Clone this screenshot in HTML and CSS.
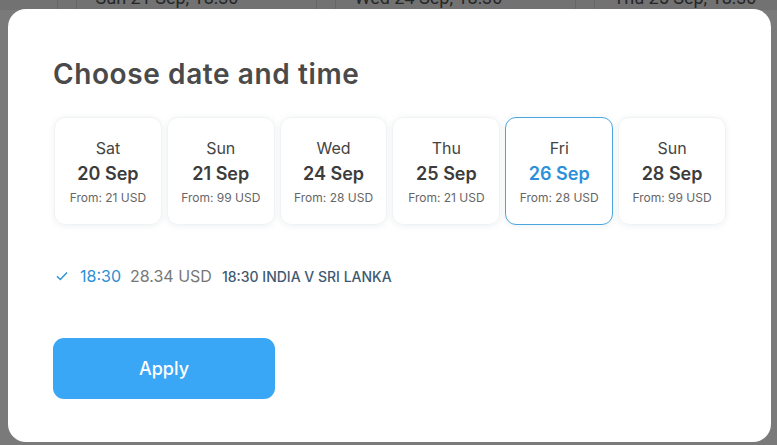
FILE: index.html
```html
<!DOCTYPE html>
<html lang="en">

<head>
    <meta charset="UTF-8">
    <meta name="viewport" content="width=device-width, initial-scale=1.0">
    <link rel="stylesheet" href="styles.css">
    <title>Choose date and time</title>
</head>

<body>
    <div class="events-row">
        <div class="event-gap"></div>
        <div class="event-cell">Sun 21 Sep, 18:30</div>
        <div class="event-gap"></div>
        <div class="event-cell">Wed 24 Sep, 18:30</div>
        <div class="event-gap"></div>
        <div class="event-cell">Thu 25 Sep, 18:30</div>
    </div>

    <div class="modal">
        <h2 class="modal-title">Choose date and time</h2>

        <div class="dates">
            <div class="date-card">
                <span class="day">Sat</span>
                <span class="date">20 Sep</span>
                <span class="price">From: 21 USD</span>
            </div>
            <div class="date-card">
                <span class="day">Sun</span>
                <span class="date">21 Sep</span>
                <span class="price">From: 99 USD</span>
            </div>
            <div class="date-card">
                <span class="day">Wed</span>
                <span class="date">24 Sep</span>
                <span class="price">From: 28 USD</span>
            </div>
            <div class="date-card">
                <span class="day">Thu</span>
                <span class="date">25 Sep</span>
                <span class="price">From: 21 USD</span>
            </div>
            <div class="date-card selected">
                <span class="day">Fri</span>
                <span class="date">26 Sep</span>
                <span class="price">From: 28 USD</span>
            </div>
            <div class="date-card">
                <span class="day">Sun</span>
                <span class="date">28 Sep</span>
                <span class="price">From: 99 USD</span>
            </div>
        </div>

        <div class="time-option">
            <svg class="check" width="12" height="10" viewBox="0 0 12 10">
                <path d="M1 5.2 L4.3 8.5 L11 1.5" fill="none" stroke="#2a8fd6" stroke-width="1.4" />
            </svg>
            <span class="time">18:30</span>
            <span class="amount">28.34 USD</span>
            <span class="event-name">18:30 INDIA V SRI LANKA</span>
        </div>

        <button class="apply-btn">Apply</button>
    </div>
</body>

</html>
```

FILE: styles.css
```css
body {
    margin: 0;
    background-color: #7a7a7a;
    font-family: Inter, Lato, sans-serif;
    height: 445px;
    overflow: hidden;
}

.events-row {
    display: flex;
    height: 24px;
    margin-top: -14px;
    background-color: #727272;
    color: #262626;
    font-family: Roboto, sans-serif;
    font-size: 18px;
}

.event-gap {
    width: 18px;
    margin-left: 57px;
    border-left: 1px solid #666;
    border-right: 1px solid #666;
}

.event-cell {
    width: 168px;
    padding-left: 19px;
    line-height: 24px;
}

.modal {
    position: absolute;
    left: 8px;
    top: 9px;
    width: 763px;
    height: 433px;
    box-sizing: border-box;
    padding: 0 45px;
    background-color: white;
    border-radius: 18px;
}

.modal-title {
    margin: 48px 0 0 0;
    font-size: 28px;
    font-weight: 600;
    color: #4a4a4a;
    line-height: 34px;
    letter-spacing: 0.6px;
}

.dates {
    display: flex;
    gap: 5px;
    margin-top: 26px;
    padding-left: 1px;
}

.date-card {
    width: 108px;
    height: 108px;
    box-sizing: border-box;
    border: 1px solid #f0f2f4;
    border-radius: 11px;
    box-shadow: 0 1px 6px rgba(40, 60, 90, 0.08);
    display: flex;
    flex-direction: column;
    align-items: center;
    padding-top: 20px;
    color: #3c3c3c;
}

.date-card.selected {
    border-color: #4aa7de;
}

.day {
    font-size: 16px;
    line-height: 20px;
    color: #444;
}

.date {
    margin-top: 5px;
    font-size: 18px;
    font-weight: 600;
    line-height: 22px;
    color: #3c3c3c;
}

.selected .date {
    color: #2b90d9;
}

.price {
    margin-top: 5px;
    font-size: 12px;
    line-height: 16px;
    color: #666;
}

.time-option {
    display: flex;
    align-items: center;
    margin-top: 40px;
    padding-left: 3px;
    height: 22px;
}

.check {
    margin-right: 12px;
}

.time {
    font-size: 16px;
    color: #2a8fd6;
    margin-right: 9px;
}

.amount {
    font-size: 16px;
    color: #777;
    margin-right: 10px;
}

.event-name {
    font-size: 14px;
    font-weight: 500;
    color: #3f5a72;
}

.apply-btn {
    display: block;
    margin-top: 51px;
    width: 222px;
    height: 61px;
    border: none;
    border-radius: 11px;
    background-color: #3aa6f6;
    color: white;
    font-family: inherit;
    font-size: 18px;
    font-weight: 500;
}
```
